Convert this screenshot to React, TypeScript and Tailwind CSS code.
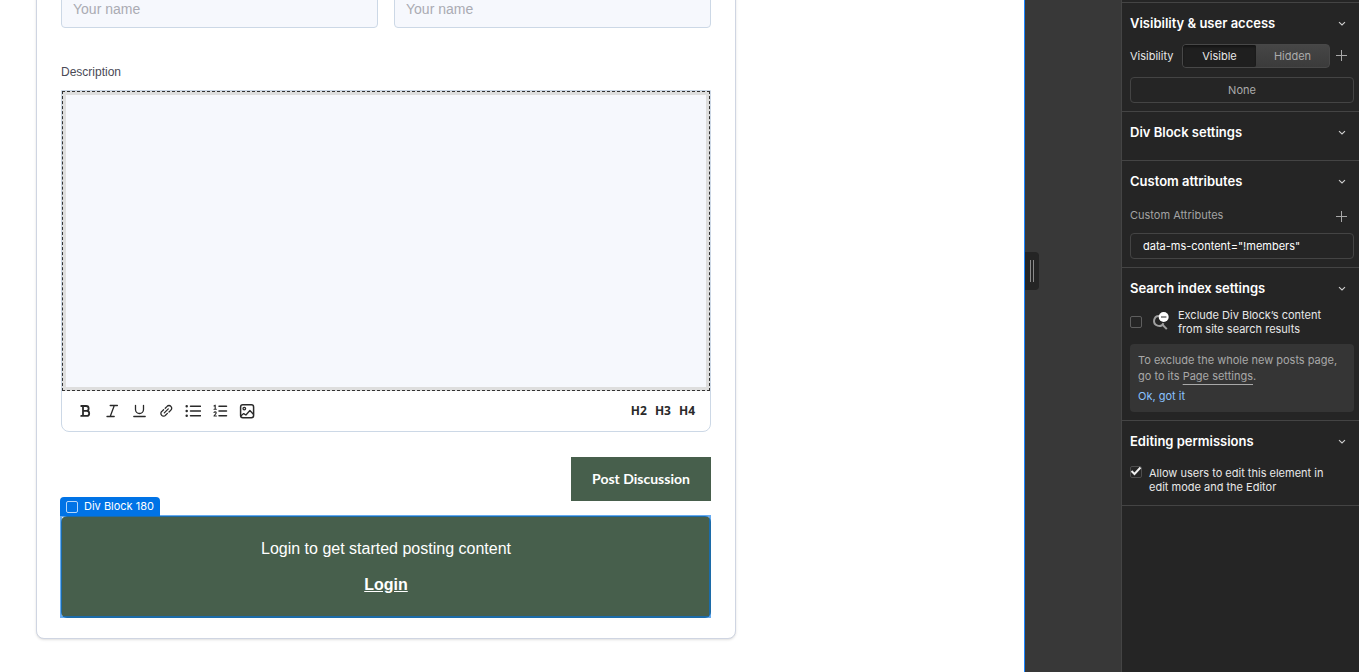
import React from "react";

const Icon = ({ size = 16, children }: { size?: number; children: React.ReactNode }) => (
    <svg
        width={size}
        height={size}
        viewBox={`0 0 ${size} ${size}`}
        fill="none"
        stroke="currentColor"
        strokeWidth="1.3"
        strokeLinecap="round"
        strokeLinejoin="round"
        aria-hidden="true"
    >
        {children}
    </svg>
);

const Chevron = () => (
    <svg width="8" height="8" viewBox="0 0 8 8" fill="none" stroke="#d0d0d0" strokeWidth="1.1" aria-hidden="true">
        <path d="M1 2.2 4 5 7 2.2" />
    </svg>
);

const Plus = () => (
    <svg width="12" height="12" viewBox="0 0 12 12" fill="none" stroke="#a8a8a8" strokeWidth="1" aria-hidden="true">
        <path d="M5.5 0v11M0 5.500h11" />
    </svg>
);

const tools = [
    {
        label: "Bold",
        icon: <path strokeWidth="1.8" d="M4.200 3h5a2.400 2.400 0 0 1 0 4.900H6M9.200 7.900h.5a2.500 2.500 0 0 1 0 5H4.200M6 3v9.900" />
    },
    { label: "Italic", icon: <path d="M6.2 2.5h7.200M3 13.500h7.200M10.200 2.700 6.300 13.300" /> },
    { label: "Underline", icon: <path d="M4.500 2.300v4.200a4 4 0 0 0 8 0V2.300M2.800 13.500h11.400" /> },
    {
        label: "Link",
        icon: (
            <path d="M6.300 9.900 10.300 5.900M7.200 5.300l1.900-1.900a2.500 2.500 0 0 1 3.800 0 2.500 2.500 0 0 1 0 3.700l-1.900 1.900M9.400 10.400l-1.900 1.900a2.500 2.500 0 0 1-3.800 0 2.500 2.500 0 0 1 0-3.700l1.900-1.900" />
        )
    },
    {
        label: "Bulleted list",
        icon: (
            <>
                <path strokeWidth="1.5" d="M5.500 3.300h10M5.500 8h10M5.500 12.700h10" />
                <path strokeWidth="2.5" d="M1.700 3.300h.01M1.700 8h.01M1.700 12.700h.01" />
            </>
        )
    },
    {
        label: "Numbered list",
        icon: (
            <>
                <path strokeWidth="1.5" d="M7 3.300h7.500M7 8h7.500M7 12.700h7.500" />
                <path strokeWidth="1.1" d="M2 3l1.200-.8v4M2 6.300h2.300M2 9.500c.6-1 2.300-.7 2.200.4C4.100 10.800 3 11.500 2 13h2.400" />
            </>
        )
    },
    {
        label: "Image",
        icon: (
            <>
                <rect x="1.600" y="1.700" width="13" height="13" rx="2.200" strokeWidth="1.500" />
                <circle cx="5.300" cy="5.600" r="1.300" />
                <path d="M2 12.800 4.700 10.600 6.900 12 10.900 7.500 14.400 11.300" />
            </>
        )
    }
];

const headings = ["H2", "H3", "H4"];

const Section = ({ title, children }: { title: string; children?: React.ReactNode }) => (
    <section className="border-b border-[#444] px-2 pr-[5px]">
        <h2>
            <button type="button" className="flex h-10 w-full items-center justify-between pt-[2px] pr-2 text-left text-[13px] font-semibold text-white">
                {title}
                <Chevron />
            </button>
        </h2>
        {children}
    </section>
);

const DiscussionForm = () => (
    <form
        onSubmit={(e) => e.preventDefault()}
        className="-mt-8 ml-9 w-full max-w-[700px] rounded-lg border border-[#cfd5e2] bg-white px-6 pt-[21px] pb-5 font-['Liberation_Sans',Arial,sans-serif] shadow-sm"
    >
        <div className="grid grid-cols-2 gap-4">
            <input
                type="text"
                aria-label="First name"
                placeholder="Your name"
                className="h-[38px] w-full rounded border border-[#ccd8e6] bg-[#f6f8fd] px-[11px] text-sm placeholder:text-[#aaabb3]"
            />
            <input
                type="text"
                aria-label="Last name"
                placeholder="Your name"
                className="h-[38px] w-full rounded border border-[#ccd8e6] bg-[#f6f8fd] px-[11px] text-sm placeholder:text-[#aaabb3]"
            />
        </div>

        <label htmlFor="description" className="mt-9 block text-xs leading-4 text-[#4a4a55]">
            Description
        </label>
        <div className="mt-[10px] rounded-b-lg border border-[#ccd8e6]">
            <div className="border border-dashed border-[#333] bg-[#dedede] p-[3px]">
                <textarea id="description" className="block h-[292px] w-full resize-none bg-[#f6f8fd] p-3 text-sm" />
            </div>
            <div className="flex h-10 items-center justify-between px-[15px] text-[#2a2a2a]">
                <div className="flex gap-[11px]">
                    {tools.map((tool) => (
                        <button key={tool.label} type="button" aria-label={tool.label}>
                            <Icon>{tool.icon}</Icon>
                        </button>
                    ))}
                </div>
                <div className="flex gap-2 font-['Open_Sans',sans-serif] text-xs font-bold">
                    {headings.map((h) => (
                        <button key={h} type="button">
                            {h}
                        </button>
                    ))}
                </div>
            </div>
        </div>

        <div className="mt-[25px] flex justify-end">
            <button type="submit" className="h-11 w-[140px] bg-[#475f4c] font-['Lato',sans-serif] text-sm font-bold text-white">
                Post Discussion
            </button>
        </div>

        <div className="relative mt-[15px] flex flex-col items-center gap-3 rounded-md bg-[#475f4c] py-[21px] text-base text-white">
            <p>Login to get started posting content</p>
            <a href="#login" className="font-bold underline">
                Login
            </a>
            {/* Selection outline with its name tag */}
            <div className="pointer-events-none absolute -top-px right-0 bottom-0 -left-px border-2 border-[#0073e6]/60" />
            <div className="absolute bottom-full -left-px flex h-[19px] items-center gap-[6px] rounded-t bg-[#0073e6] px-[6px] font-['Inter',sans-serif] text-[11px] whitespace-nowrap">
                <span className="size-3 rounded-[2px] border border-[#b5d6fb]" />
                Div Block 180
            </div>
        </div>
    </form>
);

const SettingsPanel = () => (
    <aside className="w-[238px] shrink-0 border-l border-[#444] bg-[#252525] font-['Inter',sans-serif] text-[11px] text-[#e8e8e8]">
        <div className="h-[3px] border-b border-[#444]" />

        <Section title="Visibility & user access">
            <div className="flex h-[26px] items-center">
                <span className="w-[52px]">Visibility</span>
                <div className="flex h-6 flex-1 overflow-hidden rounded border border-[#484848] bg-linear-to-b from-[#464646] to-[#3b3b3b]">
                    <button type="button" className="flex-1 rounded-[2px] bg-[#1f1f1f] shadow-[inset_0_2px_2px_#151515]">
                        Visible
                    </button>
                    <button type="button" className="flex-1 text-[#ababab]">
                        Hidden
                    </button>
                </div>
                <button type="button" aria-label="Add condition" className="flex w-6 justify-center">
                    <Plus />
                </button>
            </div>
            <button type="button" className="my-2 h-[26px] w-full rounded border border-[#444] text-[#ababab]">
                None
            </button>
        </Section>

        <Section title="Div Block settings">
            <div className="h-2" />
        </Section>

        <Section title="Custom attributes">
            <div className="flex h-8 items-center justify-between text-[#a3a3a3]">
                <span className="pb-1">Custom Attributes</span>
                <button type="button" aria-label="Add attribute" className="flex w-6 justify-center">
                    <Plus />
                </button>
            </div>
            <button type="button" className="mb-2 h-[26px] w-full rounded border border-[#444] px-3 text-left text-white">
                data-ms-content="!members"
            </button>
        </Section>

        <Section title="Search index settings">
            <label className="flex items-center leading-[14px]">
                <input type="checkbox" className="size-3 appearance-none rounded-[2px] border border-[#5e5e5e]" />
                <svg width="18" height="20" viewBox="0 0 18 20" fill="none" className="mr-2 ml-[10px]" aria-hidden="true">
                    <path d="M7 3.900A5 5 0 1 0 11.500 11.200M10 12.300l4.800 4.800" stroke="#a0a0a0" strokeWidth="2" />
                    <circle cx="11.700" cy="5" r="5" fill="#fff" />
                    <path d="M9 5h5.400" stroke="#555" strokeWidth="1.300" />
                </svg>
                <span>
                    Exclude Div Block’s content
                    <br />
                    from site search results
                </span>
            </label>
            <div className="my-2 rounded bg-[#353535] p-2 leading-4 text-[#a8a8a8]">
                <p>
                    To exclude the whole new posts page,
                    <br />
                    go to its{" "}
                    <a href="#page-settings" className="underline underline-offset-4">
                        Page settings
                    </a>
                    .
                </p>
                <button type="button" className="mt-1 block text-[#8ac2ff]">
                    Ok, got it
                </button>
            </div>
        </Section>

        <Section title="Editing permissions">
            <label className="flex items-start gap-[7px] pt-[5px] pb-[11px] leading-[14px]">
                <span className="grid">
                    <input
                        type="checkbox"
                        defaultChecked
                        className="peer col-start-1 row-start-1 size-3 appearance-none rounded-[2px] border border-[#4d4d4d]"
                    />
                    <svg
                        width="12"
                        height="12"
                        viewBox="0 0 12 12"
                        fill="none"
                        stroke="#eee"
                        strokeWidth="2"
                        className="pointer-events-none invisible col-start-1 row-start-1 peer-checked:visible"
                        aria-hidden="true"
                    >
                        <path d="M1.500 5 4.500 8 10.500 1.500" />
                    </svg>
                </span>
                <span>
                    Allow users to edit this element in
                    <br />
                    edit mode and the Editor
                </span>
            </label>
        </Section>
    </aside>
);

const App: React.FC = () => {
    return (
        <div className="flex min-h-screen">
            <main className="min-w-0 flex-1 overflow-hidden bg-white">
                <DiscussionForm />
            </main>
            <div className="w-[97px] shrink-0 border-l border-[#1a85ff] bg-[#383838] pt-[252px]">
                {/* Drag handle for the canvas width */}
                <button
                    type="button"
                    aria-label="Resize canvas"
                    className="flex h-[38px] w-[14px] items-center justify-center gap-[2px] rounded-r bg-[#252525]"
                >
                    <span className="h-[22px] w-px bg-[#8a8a8a]" />
                    <span className="h-[22px] w-px bg-[#8a8a8a]" />
                </button>
            </div>
            <SettingsPanel />
        </div>
    );
};

export default App;
